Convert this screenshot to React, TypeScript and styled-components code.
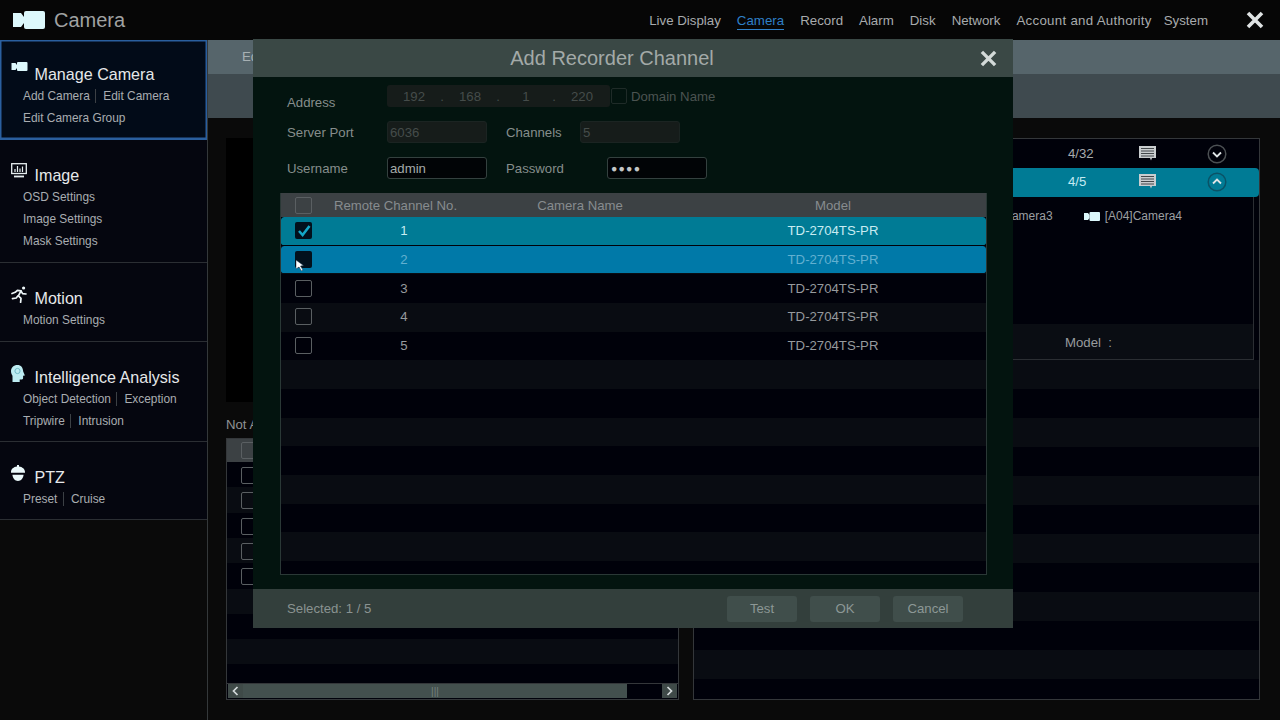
import React from "react";
import styled, { createGlobalStyle } from "styled-components";

const GlobalStyle = createGlobalStyle`
    html, body {
        margin: 0;
        padding: 0;
        background: #0a0a0a;
    }
    * {
        box-sizing: border-box;
    }
`;

const navItems = ["Live Display", "Camera", "Record", "Alarm", "Disk", "Network", "Account and Authority", "System"];

const CameraIcon: React.FC<{ width: number; height: number }> = ({ width, height }) => (
    <svg width={width} height={height} viewBox="0 0 32 18" fill="#dcf8fc">
        <path d="M0 2h8l3 4v6l-3 4H0z" />
        <rect x="11" y="0" width="21" height="18" rx="2" />
    </svg>
);

const MonitorIcon = () => (
    <svg width="16" height="15" viewBox="0 0 16 15" fill="none" stroke="#e6eef0">
        <rect x="0.7" y="0.7" width="14.6" height="9.8" strokeWidth="1.3" />
        <path d="M4 9V6M6.5 9V3M9 9V5.5M11.5 9V3.5" strokeWidth="1.2" />
        <path d="M3 13.5h10" strokeWidth="1.8" />
    </svg>
);

const RunnerIcon = () => (
    <svg width="17" height="17" viewBox="0 0 17 17" fill="none" stroke="#eef6f8" strokeWidth="1.7" strokeLinecap="round" strokeLinejoin="round">
        <circle cx="12.6" cy="2" r="1.6" fill="#eef6f8" stroke="none" />
        <path d="M1 7.5l3.2-1.2 2.2-2 3.6.6-2.6 5 2.6 2.4-.4 4" />
        <path d="M6.8 10L5.2 12 1.5 12.6" />
        <path d="M10 5l1.6 2.6 3.4.4" />
    </svg>
);

const HeadIcon = () => (
    <svg width="14" height="17" viewBox="0 0 14 17">
        <path d="M6.5 0C2.6 0 0 2.6 0 6.2c0 2.2 1 3.4 1.5 4.6V17h7.2v-2.6h2.2c.8 0 1.2-.6 1.2-1.3v-2.3l1.8-.4-1.7-3.8C12.1 2.7 10 0 6.5 0z" fill="#bdecf2" />
        <circle cx="6.5" cy="6" r="2.6" fill="none" stroke="#6fb9c6" strokeWidth="1" />
    </svg>
);

const DomeIcon = () => (
    <svg width="14" height="16" viewBox="0 0 14 16" fill="#eaf8fa">
        <path d="M6 0h2v1.4c3.4.4 6 2.6 6 5.6v.8H0V7c0-3 2.6-5.2 6-5.6z" />
        <path d="M1.4 9.8h11.2C12.2 13.4 10 16 7 16s-5.200-2.600-5.600-6.200z" />
    </svg>
);

const CloseIcon: React.FC<{ size: number; color: string }> = ({ size, color }) => (
    <svg width={size} height={size} viewBox="0 0 18 18" fill="none" stroke={color} strokeWidth="3.6">
        <path d="M2 2l14 14M16 2L2 16" />
    </svg>
);

const ListIcon = () => (
    <svg width="17" height="15" viewBox="0 0 17 15">
        <path d="M0 0h17v12h-4l-1 2.5-1-2.5H0z" fill="#c9cdcf" />
        <path d="M2 2.5h13M2 5h13M2 7.5h13M2 10h13" stroke="#33393c" strokeWidth="0.9" />
    </svg>
);

const RoundChevron: React.FC<{ up?: boolean }> = ({ up }) => (
    <svg width="20" height="20" viewBox="0 0 20 20" fill="none">
        <circle cx="10" cy="10" r="8.8" stroke={up ? "#0a5266" : "#4b5053"} strokeWidth="1.5" />
        <path d={up ? "M6 11.5l4-4 4 4" : "M6 8.5l4 4 4-4"} stroke="#dfe4e6" strokeWidth="1.8" />
    </svg>
);

const CheckMark = () => (
    <svg width="14" height="14" viewBox="0 0 14 14" fill="none">
        <path d="M2 7l3.6 4L12.5 2" stroke="#14a6c6" strokeWidth="2.6" />
    </svg>
);

const ArrowCursor = () => (
    <svg width="8" height="11" viewBox="0 0 8 11">
        <path d="M0 0l7.5 5.5-3 .6 2.5 3.9-1.6.9-2.4-3.9L0 9z" fill="#fff" stroke="#10334a" strokeWidth="0.5" />
    </svg>
);

const ScrollChevron: React.FC<{ right?: boolean }> = ({ right }) => (
    <svg width="7" height="10" viewBox="0 0 7 10" fill="none">
        <path d={right ? "M1.5 1l4 4-4 4" : "M5.5 1l-4 4 4 4"} stroke="#d4dadb" strokeWidth="1.7" />
    </svg>
);

const Checkbox: React.FC<{ $filled?: boolean; children?: React.ReactNode }> = ({ $filled, children }) => (
    <CheckBoxFrame $filled={$filled}>{children}</CheckBoxFrame>
);

const SideSection: React.FC<{
    icon: React.ReactNode;
    title: string;
    rows: string[][];
    active?: boolean;
}> = ({ icon, title, rows, active }) => (
    <Section $active={active}>
        <SectionTitle>
            <SectionIcon>{icon}</SectionIcon>
            <span>{title}</span>
        </SectionTitle>
        {rows.map((row) => (
            <SubRow key={row.join()}>
                {row.map((item) => (
                    <SubItem key={item}>{item}</SubItem>
                ))}
            </SubRow>
        ))}
    </Section>
);

const channels = [1, 2, 3, 4, 5];

const App: React.FC = () => {
    return (
        <Page>
            <GlobalStyle />
            <Header>
                <Brand>
                    <CameraIcon width={32} height={18} />
                    <BrandName>Camera</BrandName>
                </Brand>
                <Nav>
                    {navItems.map((item) => (
                        <NavItem key={item} $active={item === "Camera"}>{item}</NavItem>
                    ))}
                </Nav>
                <HeaderClose>
                    <CloseIcon size={18} color="#dfe3e4" />
                </HeaderClose>
            </Header>
            <Body>
                <Sidebar>
                    <SideSection active icon={<CameraIcon width={17} height={9} />} title="Manage Camera" rows={[["Add Camera", "Edit Camera"], ["Edit Camera Group"]]} />
                    <SideSection icon={<MonitorIcon />} title="Image" rows={[["OSD Settings"], ["Image Settings"], ["Mask Settings"]]} />
                    <SideSection icon={<RunnerIcon />} title="Motion" rows={[["Motion Settings"]]} />
                    <SideSection icon={<HeadIcon />} title="Intelligence Analysis" rows={[["Object Detection", "Exception"], ["Tripwire", "Intrusion"]]} />
                    <SideSection icon={<DomeIcon />} title="PTZ" rows={[["Preset", "Cruise"]]} />
                </Sidebar>
                <Main>
                    <TabBar>Edit Camera</TabBar>
                    <SubBar />
                    <Columns>
                        <LeftColumn>
                            <Preview />
                            <PanelLabel>Not Added Camera</PanelLabel>
                            <LeftTable>
                                <LeftHeader><Checkbox /></LeftHeader>
                                <LeftRows>
                                    {channels.map((n) => (
                                        <LeftRow key={n}><Checkbox /></LeftRow>
                                    ))}
                                </LeftRows>
                                <ScrollBar>
                                    <ScrollButton><ScrollChevron /></ScrollButton>
                                    <ScrollTrack>
                                        <ScrollThumb>|||</ScrollThumb>
                                    </ScrollTrack>
                                    <ScrollButton><ScrollChevron right /></ScrollButton>
                                </ScrollBar>
                            </LeftTable>
                        </LeftColumn>
                        <RightPanel>
                            <RecorderRow>
                                <span>4/32</span>
                                <RecorderIcon><ListIcon /></RecorderIcon>
                                <RecorderIcon><RoundChevron /></RecorderIcon>
                            </RecorderRow>
                            <RecorderRow $selected>
                                <span>4/5</span>
                                <RecorderIcon><ListIcon /></RecorderIcon>
                                <RecorderIcon><RoundChevron up /></RecorderIcon>
                            </RecorderRow>
                            <Expanded>
                                <CameraList>
                                    <CameraEntry><CameraIcon width={16} height={9} />[A03]Camera3</CameraEntry>
                                    <CameraEntry><CameraIcon width={16} height={9} />[A04]Camera4</CameraEntry>
                                </CameraList>
                                <ModelRow>Model&nbsp;&nbsp;:</ModelRow>
                            </Expanded>
                            <RightStripes />
                        </RightPanel>
                    </Columns>
                </Main>
            </Body>
            <Modal>
                <ModalTitle>
                    <span>Add Recorder Channel</span>
                    <ModalClose><CloseIcon size={17} color="#d3dad8" /></ModalClose>
                </ModalTitle>
                <ModalBody>
                    <FormRow>
                        <AddressLabel>Address</AddressLabel>
                        <AddressField>
                            <IpPart>192</IpPart><IpDot>.</IpDot>
                            <IpPart>168</IpPart><IpDot>.</IpDot>
                            <IpPart>1</IpPart><IpDot>.</IpDot>
                            <IpPart>220</IpPart>
                        </AddressField>
                        <DomainOption>
                            <DomainBox />
                            Domain Name
                        </DomainOption>
                    </FormRow>
                    <FormRow>
                        <FieldLabel>Server Port</FieldLabel>
                        <Field $disabled>6036</Field>
                        <SecondLabel $width={74}>Channels</SecondLabel>
                        <Field $disabled>5</Field>
                    </FormRow>
                    <FormRow>
                        <FieldLabel>Username</FieldLabel>
                        <Field>admin</Field>
                        <SecondLabel $width={101}>Password</SecondLabel>
                        <Field><PasswordDots>●●●●</PasswordDots></Field>
                    </FormRow>
                    <ChannelTable>
                        <TableHead>
                            <CheckCell><Checkbox /></CheckCell>
                            <HeadChannel>Remote Channel No.</HeadChannel>
                            <Cell>Camera Name</Cell>
                            <Cell>Model</Cell>
                        </TableHead>
                        <TableRows>
                            {channels.map((n) => (
                                <ChannelRow key={n} $state={n === 1 ? "checked" : n === 2 ? "hover" : "plain"}>
                                    <CheckCell>
                                        <Checkbox $filled={n < 3}>
                                            {n === 1 && <CheckMark />}
                                            {n === 2 && <CursorWrap><ArrowCursor /></CursorWrap>}
                                        </Checkbox>
                                    </CheckCell>
                                    <Cell>{n}</Cell>
                                    <Cell />
                                    <Cell>TD-2704TS-PR</Cell>
                                </ChannelRow>
                            ))}
                        </TableRows>
                    </ChannelTable>
                </ModalBody>
                <ModalFooter>
                    <SelectedText>Selected:&nbsp;1 / 5</SelectedText>
                    <FooterButton>Test</FooterButton>
                    <FooterButton>OK</FooterButton>
                    <FooterButton>Cancel</FooterButton>
                </ModalFooter>
            </Modal>
        </Page>
    );
};

const Page = styled.div`
    position: relative;
    display: flex;
    flex-direction: column;
    width: 1280px;
    height: 720px;
    overflow: hidden;
    background: #0a0a0a;
    font-family: "Liberation Sans", Arial, sans-serif;
    color: #a5a9ac;
`;

const Header = styled.header`
    display: flex;
    align-items: center;
    height: 40px;
    flex: none;
    background: #060606;
`;

const Brand = styled.div`
    display: flex;
    align-items: center;
    gap: 9px;
    padding-left: 13px;
    flex: 1;
`;

const BrandName = styled.span`
    margin-top: 1px;
    font-size: 20px;
    color: #a0a2a2;
`;

const Nav = styled.nav`
    display: flex;
    gap: 16px;
    padding-top: 2px;
`;

const NavItem = styled.span<{ $active?: boolean }>`
    font-size: 13.3px;
    line-height: 16px;
    color: ${(p) => (p.$active ? "#2f80c8" : "#a8abad")};
    border-bottom: 1px solid ${(p) => (p.$active ? "#2f80c8" : "transparent")};
    &:nth-child(7) {
        margin-right: -4px;
        letter-spacing: 0.28px;
    }
`;

const HeaderClose = styled.div`
    display: flex;
    margin: 0 16px 0 38px;
`;

const Body = styled.div`
    display: flex;
    flex: 1;
    min-height: 0;
`;

const Sidebar = styled.aside`
    width: 208px;
    flex: none;
    border-right: 1px solid #34383a;
`;

const Section = styled.section<{ $active?: boolean }>`
    padding: ${(p) => (p.$active ? "23px" : "24px")} 0 10px;
    background: ${(p) => (p.$active ? "#020b18" : "#05060f")};
    border-bottom: 1px solid ${(p) => (p.$active ? "#2a5f9e" : "#2b2e33")};
    box-shadow: ${(p) => (p.$active ? "inset 0 0 0 1.5px #2a5f9e" : "none")};
    &:nth-child(n + 4) {
        padding-bottom: 9px;
    }
`;

const SectionTitle = styled.div`
    display: flex;
    align-items: flex-start;
    height: 22px;
    font-size: 16.1px;
    line-height: 22px;
    color: #e6e8ea;
`;

const SectionIcon = styled.div`
    display: flex;
    width: 23.5px;
    margin: -1px 0 0 11px;
`;

const SubRow = styled.div`
    display: flex;
    height: 22px;
    align-items: center;
    padding-left: 23px;
`;

const SubItem = styled.span`
    font-size: 11.9px;
    line-height: 14px;
    color: #a9adb1;
    & + & {
        margin-left: 5.5px;
        padding-left: 7px;
        border-left: 1px solid #3c4045;
    }
`;

const Main = styled.main`
    display: flex;
    flex-direction: column;
    flex: 1;
    min-width: 0;
`;

const TabBar = styled.div`
    height: 34px;
    padding: 9px 0 0 34px;
    background: #56656b;
    font-size: 13.3px;
    color: #a7b0b3;
`;

const SubBar = styled.div`
    height: 44px;
    background: #3f4a4f;
`;

const Columns = styled.div`
    display: flex;
    flex: 1;
    gap: 14px;
    padding: 20px 20px 20px 18px;
    min-height: 0;
`;

const LeftColumn = styled.div`
    display: flex;
    flex-direction: column;
    width: 453px;
    flex: none;
`;

const Preview = styled.div`
    height: 264px;
    background: #000;
`;

const PanelLabel = styled.div`
    margin-top: 14px;
    height: 22px;
    font-size: 13.2px;
    line-height: 18px;
    color: #8f9294;
`;

const LeftTable = styled.div`
    display: flex;
    flex-direction: column;
    flex: 1;
    background: #00010a;
    border: 1px solid #34373a;
`;

const LeftHeader = styled.div`
    display: flex;
    align-items: center;
    height: 23px;
    padding-left: 14px;
    background: #3c4144;
`;

const LeftRows = styled.div`
    flex: 1;
    padding-top: 1px;
    background: repeating-linear-gradient(#00010a 0 25.3px, #090c12 25.3px 50.6px);
`;

const LeftRow = styled.div`
    display: flex;
    align-items: center;
    height: 25.3px;
    padding-left: 14px;
`;

const ScrollBar = styled.div`
    display: flex;
    height: 16px;
    padding: 0 1px 1px;
    border-top: 1px solid #34373a;
`;

const ScrollButton = styled.div`
    display: flex;
    align-items: center;
    justify-content: center;
    width: 15px;
    background: #3f4a48;
`;

const ScrollTrack = styled.div`
    flex: 1;
    background: #00010a;
`;

const ScrollThumb = styled.div`
    width: 384px;
    height: 100%;
    background: #43504e;
    color: #76827f;
    font-size: 10px;
    line-height: 15px;
    text-align: center;
`;

const RightPanel = styled.div`
    display: flex;
    flex-direction: column;
    flex: 1;
    background: #00010a;
    border: 1px solid #34373a;
`;

const RecorderRow = styled.div<{ $selected?: boolean }>`
    display: grid;
    grid-template-columns: 71px 68px 20px;
    align-items: center;
    justify-content: end;
    height: 29px;
    padding-right: 32px;
    padding-bottom: ${(p) => (p.$selected ? "2px" : "0")};
    font-size: 13.2px;
    color: ${(p) => (p.$selected ? "#c4eaf2" : "#a7abad")};
    background: ${(p) => (p.$selected ? "#007b95" : "transparent")};
    border-radius: ${(p) => (p.$selected ? "4px" : "0")};
`;

const RecorderIcon = styled.span`
    display: flex;
    align-items: center;
`;

const Expanded = styled.div`
    display: flex;
    flex-direction: column;
    height: 163px;
    margin-right: 5px;
    border: 1px solid #2b2e33;
    border-top: none;
`;

const CameraList = styled.div`
    display: flex;
    justify-content: flex-end;
    gap: 31px;
    flex: 1;
    padding: 11px 71px 0 0;
    font-size: 12px;
    color: #9c9fa2;
`;

const CameraEntry = styled.div`
    display: flex;
    align-items: center;
    gap: 5px;
    height: 16px;
`;

const ModelRow = styled.div`
    height: 35px;
    padding: 11px 0 0 370px;
    background: #0a0d13;
    font-size: 13.2px;
    color: #989b9e;
`;

const RightStripes = styled.div`
    flex: 1;
    background: repeating-linear-gradient(#090c12 0 29px, #00010a 29px 58px);
`;

const Modal = styled.div`
    position: absolute;
    top: 39px;
    left: 253px;
    display: flex;
    flex-direction: column;
    width: 760px;
    height: 589px;
    background: #03140f;
`;

const ModalTitle = styled.div`
    position: relative;
    display: flex;
    align-items: center;
    justify-content: center;
    height: 38px;
    flex: none;
    padding-right: 42px;
    background: #3a4845;
    font-size: 20px;
    color: #a3aaa8;
`;

const ModalClose = styled.div`
    position: absolute;
    top: 11px;
    right: 16px;
    display: flex;
`;

const ModalBody = styled.div`
    display: flex;
    flex-direction: column;
    flex: 1;
    min-height: 0;
    padding: 8px 26px 14px 27px;
`;

const FormRow = styled.div`
    display: flex;
    align-items: center;
    height: 22px;
    flex: none;
    margin-bottom: 14px;
`;

const FieldLabel = styled.span`
    width: 107px;
    padding-left: 7px;
    font-size: 13.2px;
    color: #868e8c;
`;

const AddressLabel = styled(FieldLabel)`
    padding-top: 12px;
`;

const AddressField = styled.div`
    display: flex;
    width: 223px;
    height: 22px;
    padding-left: 5px;
    margin-right: 1px;
    background: #161c1a;
    border-radius: 3px;
    font-size: 13.2px;
    line-height: 23px;
    color: #454c4a;
`;

const IpPart = styled.span`
    width: 44px;
    text-align: center;
`;

const IpDot = styled.span`
    width: 12px;
    text-align: center;
`;

const DomainOption = styled.div`
    display: flex;
    align-items: center;
    gap: 4px;
    font-size: 13.2px;
    color: #4b5351;
`;

const DomainBox = styled.span`
    width: 16px;
    height: 16px;
    border: 1px solid #1f2b28;
    border-radius: 2px;
`;

const SecondLabel = styled.span<{ $width: number }>`
    width: ${(p) => p.$width + 19}px;
    padding-left: 19px;
    font-size: 13.2px;
    color: #868e8c;
`;

const Field = styled.div<{ $disabled?: boolean }>`
    width: 100px;
    height: 22px;
    padding-left: 2px;
    background: ${(p) => (p.$disabled ? "#161c1a" : "#010406")};
    border: 1px solid ${(p) => (p.$disabled ? "#1b2422" : "#34413f")};
    border-radius: 3px;
    font-size: 13.2px;
    line-height: 21px;
    color: ${(p) => (p.$disabled ? "#454c4a" : "#a4aaa9")};
`;

const PasswordDots = styled.span`
    margin-left: 1px;
    font-size: 10.5px;
    letter-spacing: 1.2px;
    vertical-align: 1px;
    color: #c2c6c6;
`;

const ChannelTable = styled.div`
    display: flex;
    flex-direction: column;
    flex: 1;
    min-height: 0;
    background: #00010a;
    border: 1px solid #2a3836;
    border-top: none;
`;

const columns = "45px 156px 196px 1fr";

const TableHead = styled.div`
    display: grid;
    grid-template-columns: ${columns};
    align-items: center;
    height: 24px;
    flex: none;
    background: #3c4144;
    font-size: 13.2px;
    color: #878c8f;
`;

const Cell = styled.div`
    text-align: center;
    &:last-child {
        padding-left: 2px;
    }
`;

const HeadChannel = styled(Cell)`
    padding-right: 17px;
    white-space: nowrap;
`;

const CheckCell = styled.div`
    display: flex;
    padding-left: 14px;
`;

const TableRows = styled.div`
    flex: 1;
    padding-bottom: 1px;
    background: repeating-linear-gradient(#00010a 0 28.67px, #090c12 28.67px 57.34px);
`;

const rowColors = {
    checked: { bg: "#007b95", text: "#c8ecf2" },
    hover: { bg: "#0079a8", text: "#62b0d0" },
    plain: { bg: "transparent", text: "#969a9d" },
};

const ChannelRow = styled.div<{ $state: keyof typeof rowColors }>`
    display: grid;
    grid-template-columns: ${columns};
    align-items: center;
    height: 28.67px;
    background: ${(p) => rowColors[p.$state].bg};
    background-clip: padding-box;
    border-bottom: 1px solid transparent;
    border-radius: 3px;
    font-size: 13.2px;
    color: ${(p) => rowColors[p.$state].text};
`;

const CheckBoxFrame = styled.span<{ $filled?: boolean }>`
    position: relative;
    display: flex;
    align-items: center;
    justify-content: center;
    width: 17px;
    height: 17px;
    background: ${(p) => (p.$filled ? "#02101c" : "transparent")};
    border: ${(p) => (p.$filled ? "none" : "1.5px solid #5a5f62")};
    border-radius: 2px;
`;

const CursorWrap = styled.span`
    position: absolute;
    left: 1px;
    top: 9px;
    display: flex;
`;

const ModalFooter = styled.div`
    display: flex;
    align-items: center;
    gap: 13px;
    height: 39px;
    flex: none;
    padding: 0 50px 0 34px;
    background: #333f3c;
`;

const SelectedText = styled.span`
    flex: 1;
    font-size: 13.2px;
    color: #8a9391;
`;

const FooterButton = styled.div`
    width: 70px;
    height: 26px;
    background: #404e4b;
    border-radius: 3px;
    font-size: 13.2px;
    line-height: 26px;
    text-align: center;
    color: #8d9896;
`;

export default App;
